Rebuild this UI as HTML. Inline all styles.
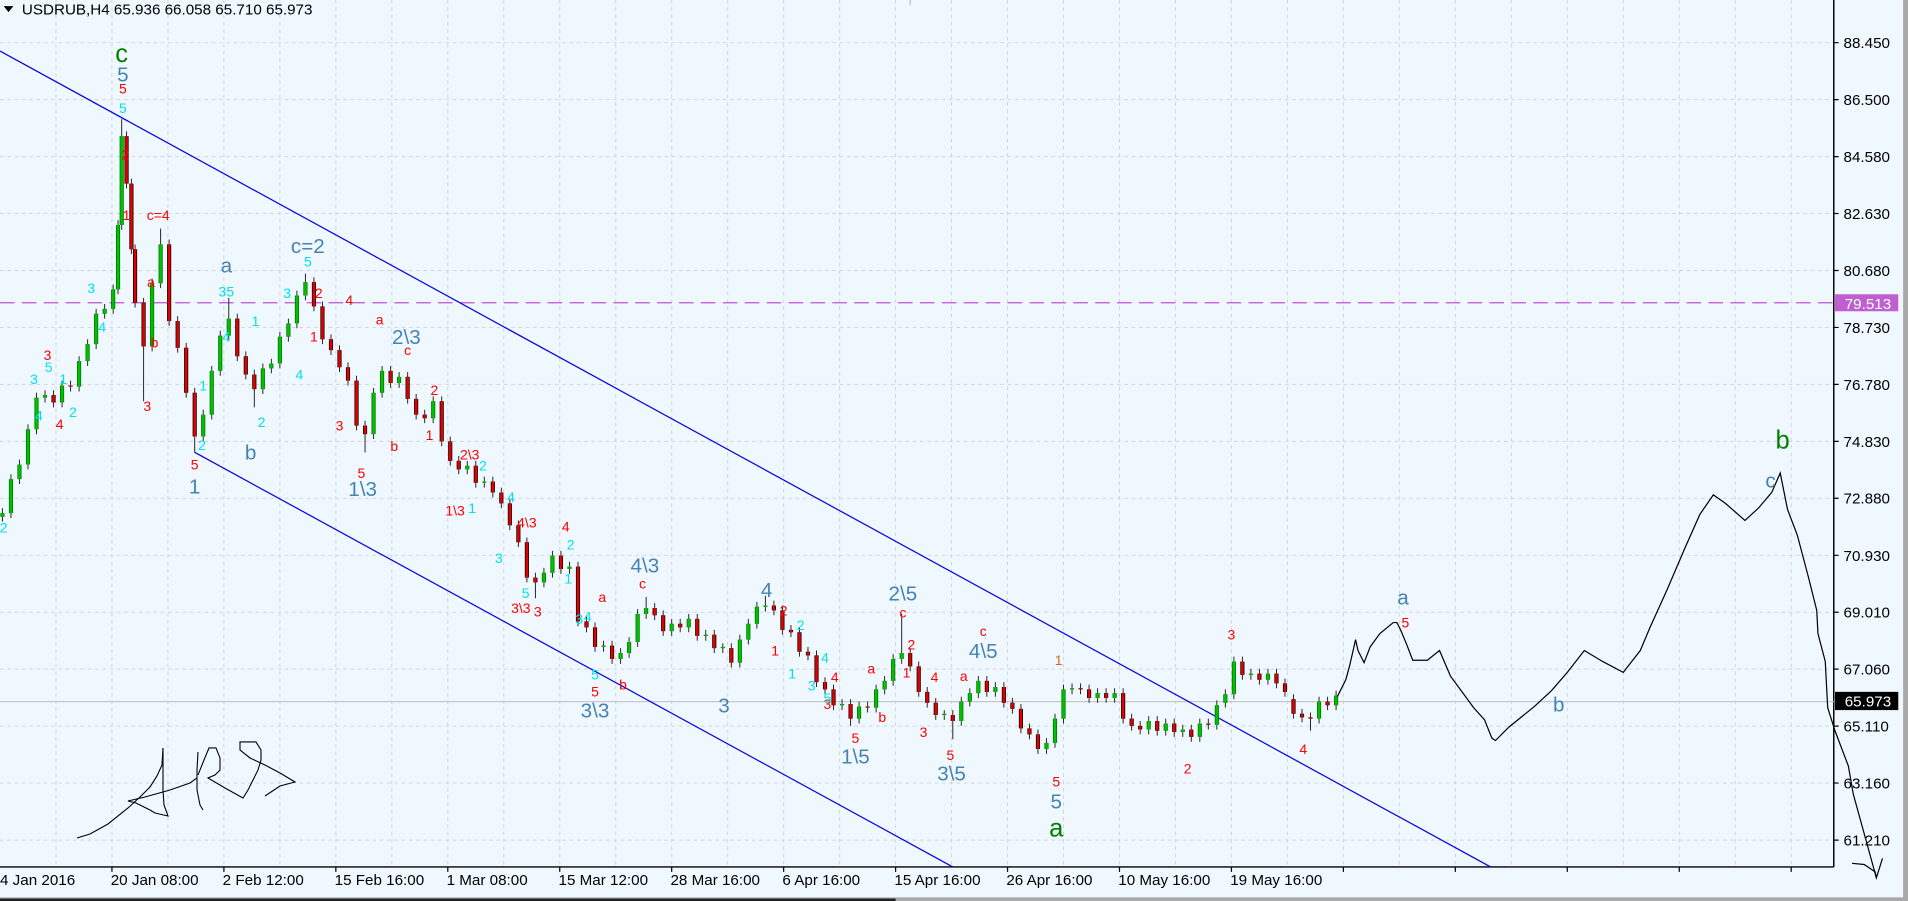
<!DOCTYPE html>
<html><head><meta charset="utf-8"><style>
html,body{margin:0;padding:0;background:#f0f8ff;overflow:hidden}
svg{display:block}
text{font-family:"Liberation Sans",sans-serif}
</style></head><body>
<svg width="1908" height="901" viewBox="0 0 1568 741" preserveAspectRatio="none" xmlns="http://www.w3.org/2000/svg">
<defs>
<path id="gb" d="M2 425V422M9 422V394M16 394V382M23 382V353M30 353V327M37 327V325M51 331V317M65 318V297M72 297V283M79 283V258M86 258V254M93 254V238M97 238V185M100 185V112M125 285V233M132 233V201M167 359V341M174 341V305M181 305V276M188 276V262M216 320V303M223 303V299M230 299V277M237 277V266M244 266V243M251 243V232M307 357V323M314 323V305M328 315V310M356 344V330M384 386V383M398 397V396M447 479V471M454 471V457M468 468V466M496 532V531M510 542V537M517 537V528M524 528V505M531 505V500M552 519V513M566 516V509M580 523V522M594 533V532M608 545V526M615 526V513M622 513V499M629 499V498M692 580V579M706 591V581M720 582V567M727 567V560M734 560V542M741 542V537M776 588V587M790 593V577M797 577V570M804 570V560M818 569V565M860 616V611M867 611V591M874 591V567M881 567V566M902 574V570M916 574V570M944 600V593M958 601V595M972 602V600M986 606V595M1000 596V580M1007 578V571M1014 571V544M1028 555V554M1042 559V554M1084 591V577M1098 580V572"/>
<path id="rb" d="M44 325V331M58 317V318M104 112V151M108 151V205M111 205V249M118 249V285M139 201V264M146 264V286M153 286V323M160 323V359M195 262V293M202 293V308M209 308V320M258 232V252M265 252V279M272 279V288M279 288V302M286 302V313M293 313V350M300 350V357M321 305V315M335 310V328M342 328V341M349 341V344M363 330V363M370 363V379M377 379V386M391 383V397M405 396V405M412 405V414M419 414V432M426 432V446M433 446V475M440 475V479M461 457V468M475 466V511M482 511V516M489 516V532M503 531V542M538 500V506M545 506V519M559 513V516M573 509V523M587 522V533M601 533V545M636 498V502M643 502V518M650 518V520M657 520V536M664 536V539M671 539V561M678 561V567M685 567V580M699 579V591M713 581V582M748 537V548M755 548V569M762 569V578M769 578V588M783 588V593M811 560V569M825 565V578M832 578V583M839 583V599M846 599V604M853 604V616M888 566V567M895 567V574M909 570V574M923 570V591M930 591V597M937 597V600M951 593V601M965 595V602M979 600V606M993 595V596M1021 544V555M1035 554V559M1049 554V562M1056 562V569M1063 575V587M1070 587V590M1077 590V591M1091 577V580"/>
</defs>
<rect x="0" y="0" width="1568" height="741" fill="#f0f8ff"/>
<g stroke="#d0d4d8" stroke-width="0.8" stroke-dasharray="3,3" fill="none">
<path d="M0 35.1H1507M0 81.9H1507M0 128.8H1507M0 175.6H1507M0 222.5H1507M0 269.3H1507M0 316.1H1507M0 363H1507M0 409.8H1507M0 456.7H1507M0 503.5H1507M0 550.3H1507M0 597.2H1507M0 644H1507M0 690.9H1507"/>
<path d="M46 0V713M92 0V713M138 0V713M184 0V713M230 0V713M276 0V713M322 0V713M368 0V713M414 0V713M460 0V713M506 0V713M552 0V713M598 0V713M644 0V713M690 0V713M736 0V713M782 0V713M828 0V713M874 0V713M920 0V713M966 0V713M1012 0V713M1058 0V713M1104 0V713M1150 0V713M1196 0V713M1242 0V713M1288 0V713M1334 0V713M1380 0V713M1426 0V713M1472 0V713"/>
</g>
<rect x="1564" y="0" width="4" height="741" fill="#a8a8a8"/>
<rect x="0" y="738" width="1568" height="3" fill="#a8a8a8"/>
<rect x="0" y="739" width="736" height="2" fill="#222"/>
<line x1="1507" y1="0" x2="1507" y2="713" stroke="#000" stroke-width="1.2"/>
<line x1="0" y1="713" x2="1507" y2="713" stroke="#000" stroke-width="1.2"/>
<path stroke="#000" stroke-width="1" d="M1507 35.1h4M1507 81.9h4M1507 128.8h4M1507 175.6h4M1507 222.5h4M1507 269.3h4M1507 316.1h4M1507 363h4M1507 409.8h4M1507 456.7h4M1507 503.5h4M1507 550.3h4M1507 597.2h4M1507 644h4M1507 690.9h4M92 713v4M184 713v4M276 713v4M368 713v4M460 713v4M552 713v4M644 713v4M736 713v4M828 713v4M920 713v4M1012 713v4M1104 713v4M1196 713v4M1288 713v4M1380 713v4M1472 713v4"/>
<g font-size="12.5" fill="#000">
<text x="1515" y="39.6">88.450</text><text x="1515" y="86.4">86.500</text><text x="1515" y="133.3">84.580</text><text x="1515" y="180.1">82.630</text><text x="1515" y="227">80.680</text><text x="1515" y="273.8">78.730</text><text x="1515" y="320.6">76.780</text><text x="1515" y="367.5">74.830</text><text x="1515" y="414.3">72.880</text><text x="1515" y="461.2">70.930</text><text x="1515" y="508">69.010</text><text x="1515" y="554.8">67.060</text><text x="1515" y="601.7">65.110</text><text x="1515" y="648.5">63.160</text><text x="1515" y="695.4">61.210</text>
<text x="0" y="728">4 Jan 2016</text>
<text x="91" y="728">20 Jan 08:00</text>
<text x="183" y="728">2 Feb 12:00</text>
<text x="275" y="728">15 Feb 16:00</text>
<text x="367" y="728">1 Mar 08:00</text>
<text x="459" y="728">15 Mar 12:00</text>
<text x="551" y="728">28 Mar 16:00</text>
<text x="643" y="728">6 Apr 16:00</text>
<text x="735" y="728">15 Apr 16:00</text>
<text x="827" y="728">26 Apr 16:00</text>
<text x="919" y="728">10 May 16:00</text>
<text x="1011" y="728">19 May 16:00</text>
</g>
<line x1="0" y1="577" x2="1507" y2="577" stroke="#c8c8c8" stroke-width="1"/>
<line x1="0" y1="249" x2="1507" y2="249" stroke="#c050d8" stroke-width="1" stroke-dasharray="12,6"/>
<rect x="1508" y="242" width="52" height="14" fill="#c060d0"/>
<text x="1516" y="254" font-size="12.5" fill="#fff">79.513</text>
<rect x="1508" y="569" width="52" height="15" fill="#000"/>
<text x="1516" y="581" font-size="12.5" fill="#fff">65.973</text>
<line x1="0" y1="42" x2="1225" y2="713" stroke="#0000e0" stroke-width="1"/>
<line x1="160" y1="372" x2="783" y2="713" stroke="#0000e0" stroke-width="1"/>
<!-- candles -->
<path fill="none" stroke="#222" stroke-width="0.8" d="M2 418V429M9 390V426M16 378V398M23 349V386M30 323V357M37 321V331M44 321V335M51 313V335M58 313V322M65 293V322M72 279V301M79 254V287M86 250V262M93 234V258M97 181V242M100 98V189M104 108V155M108 147V209M111 201V253M118 245V330M125 229V289M132 188V237M139 197V268M146 260V290M153 282V327M160 319V372M167 337V363M174 301V345M181 272V309M188 245V280M195 258V297M202 289V312M209 304V335M216 299V324M223 295V307M230 273V303M237 262V281M244 239V270M251 225V247M258 228V256M265 248V283M272 275V292M279 284V306M286 298V317M293 309V354M300 346V372M307 319V361M314 301V327M321 301V319M328 306V319M335 306V332M342 324V345M349 337V348M356 326V348M363 326V367M370 359V383M377 375V390M384 379V390M391 379V401M398 392V401M405 392V409M412 401V418M419 410V436M426 428V450M433 442V479M440 471V492M447 467V483M454 453V475M461 453V472M468 462V472M475 462V515M482 507V520M489 512V536M496 527V536M503 527V546M510 533V546M517 524V541M524 501V532M531 491V509M538 496V510M545 502V523M552 509V523M559 509V520M566 505V520M573 505V527M580 518V527M587 518V537M594 529V537M601 529V549M608 522V549M615 509V530M622 495V517M629 490V503M636 494V506M643 498V522M650 514V524M657 516V540M664 532V543M671 535V565M678 557V571M685 563V584M692 575V584M699 575V597M706 577V595M713 577V586M720 563V586M727 556V571M734 538V564M741 505V546M748 533V552M755 544V573M762 565V582M769 574V592M776 584V592M783 584V608M790 573V597M797 566V581M804 556V574M811 556V573M818 561V573M825 561V582M832 574V587M839 579V603M846 595V608M853 600V620M860 607V620M867 587V615M874 563V595M881 562V571M888 562V571M895 563V578M902 566V578M909 566V578M916 566V578M923 566V595M930 587V601M937 593V604M944 589V604M951 589V605M958 591V605M965 591V606M972 596V606M979 596V610M986 591V610M993 591V600M1000 576V600M1007 567V582M1014 540V575M1021 540V559M1028 550V559M1035 550V563M1042 550V563M1049 550V566M1056 558V573M1063 571V591M1070 583V594M1077 586V601M1084 573V595M1091 573V584M1098 568V584"/>
<use href="#gb" fill="none" stroke="#007000" stroke-width="3.4"/>
<use href="#gb" fill="none" stroke="#00c000" stroke-width="2.2"/>
<use href="#rb" fill="none" stroke="#000" stroke-width="3.4"/>
<use href="#rb" fill="none" stroke="#e00000" stroke-width="2.2"/>
<!-- forecast -->
<polyline fill="none" stroke="#000" stroke-width="1" points="1099,573 1106,559 1109,548 1112,535 1114,526 1116,535 1121,545 1126,532 1134,521 1145,512 1148,512 1151,518 1156,530 1161,543 1173,543 1183,535 1192,556 1211,582 1220,592 1226,607 1229,609 1240,598 1261,581 1275,568 1288,553 1302,535 1317,544 1334,553 1348,535 1356,516 1370,485 1385,450 1397,423 1408,407 1418,414 1434,428 1445,418 1456,405 1463,389 1469,419 1477,440 1486,474 1493,502 1494,521 1500,544 1502,582 1508,601 1519,630 1523,653 1531,682 1542,722 1547,706"/>
<polyline fill="none" stroke="#000" stroke-width="1" points="1522,710 1532,711 1541,717 1542,722"/>
<g transform="scale(0.8218,0.8224)" fill="none" stroke="#000" stroke-width="1.1">
<polyline points="77,838 90,834 108,824 128,808 140,797 150,787 157,776 162,765 163,748"/>
<polyline points="163,748 163,770 163,790 164,805 168,816 155,813 150,810 136,803 128,801 145,797 170,790 190,783 197,778"/>
<polyline points="198,752 197,770 197,790 200,805 203,810"/>
<polyline points="198,775 204,760 209,748 216,748 220,758 220,770 215,775 208,778 225,788 243,798 248,790 252,782 258,770 261,760 261,750 256,742 240,742 240,750 250,758 265,765 280,773 295,782 280,786 265,796"/>
</g>
<path d="M3,5 L11,5 L7,10 Z" fill="#000"/>
<text x="18" y="12" font-size="12.5" fill="#000">USDRUB,H4  65.936 66.058 65.710 65.973</text>
<line x1="748" y1="0" x2="748" y2="4" stroke="#bbb"/>
<g text-anchor="middle">
<g fill="#008000" font-size="21">
<text x="100" y="51">c</text><text x="868" y="688">a</text><text x="1465" y="369">b</text>
</g>
<g fill="#4682b4" font-size="17">
<text x="101" y="67">5</text><text x="186" y="224">a</text><text x="253" y="208">c=2</text>
<text x="206" y="378">b</text><text x="160" y="406">1</text><text x="298" y="408">1\3</text>
<text x="334" y="283">2\3</text><text x="530" y="471">4\3</text><text x="489" y="590">3\3</text>
<text x="595" y="586">3</text><text x="630" y="491">4</text><text x="703" y="628">1\5</text>
<text x="742" y="494">2\5</text><text x="808" y="541">4\5</text><text x="782" y="642">3\5</text>
<text x="868" y="665">5</text><text x="1153" y="497">a</text><text x="1281" y="585">b</text>
<text x="1455" y="401">c</text>
</g>
<g fill="#ff0000" font-size="11.5">
<text x="101" y="77">5</text><text x="103" y="131">2</text><text x="104" y="181">1</text>
<text x="130" y="181">c=4</text><text x="124" y="236">a</text><text x="127" y="286">b</text>
<text x="121" y="338">3</text><text x="39" y="296">3</text><text x="49" y="353">4</text>
<text x="160" y="386">5</text><text x="262" y="245">2</text><text x="258" y="281">1</text>
<text x="287" y="251">4</text><text x="279" y="354">3</text><text x="297" y="393">5</text>
<text x="312" y="267">a</text><text x="335" y="292">c</text><text x="324" y="371">b</text>
<text x="357" y="325">2</text><text x="353" y="362">1</text><text x="386" y="378">2\3</text>
<text x="374" y="424">1\3</text><text x="433" y="434">4\3</text><text x="465" y="437">4</text>
<text x="428" y="504">3\3</text><text x="442" y="507">3</text>
<text x="528" y="484">c</text><text x="495" y="495">a</text><text x="489" y="573">5</text>
<text x="512" y="567">b</text><text x="644" y="506">2</text><text x="637" y="539">1</text>
<text x="686" y="561">4</text><text x="680" y="583">3</text><text x="703" y="611">5</text>
<text x="716" y="554">a</text><text x="725" y="594">b</text><text x="742" y="508">c</text>
<text x="749" y="534">2</text><text x="745" y="557">1</text><text x="768" y="561">4</text>
<text x="759" y="606">3</text><text x="792" y="560">a</text><text x="808" y="523">c</text>
<text x="781" y="625">5</text><text x="868" y="647">5</text><text x="976" y="636">2</text>
<text x="1012" y="526">3</text><text x="1071" y="620">4</text><text x="1155" y="516">5</text>
</g>
<g fill="#d2691e" font-size="11.5"><text x="870" y="547">1</text></g>
<g fill="#00e0f0" font-size="11.5">
<text x="101" y="93">5</text><text x="75" y="241">3</text><text x="84" y="273">4</text>
<text x="28" y="316">3</text><text x="40" y="306">5</text><text x="52" y="316">1</text>
<text x="60" y="343">2</text><text x="32" y="346">4</text><text x="3" y="438">2</text>
<text x="186" y="244">35</text><text x="186" y="281">4</text><text x="210" y="268">1</text>
<text x="215" y="351">2</text><text x="167" y="321">1</text><text x="166" y="370">2</text>
<text x="253" y="219">5</text><text x="236" y="245">3</text><text x="246" y="312">4</text>
<text x="397" y="387">2</text><text x="388" y="422">1</text><text x="420" y="413">4</text>
<text x="410" y="463">3</text><text x="469" y="452">2</text><text x="467" y="480">1</text>
<text x="432" y="492">5</text><text x="483" y="511">4</text><text x="476" y="513">3</text>
<text x="489" y="559">5</text><text x="658" y="518">2</text><text x="651" y="558">1</text>
<text x="678" y="545">4</text><text x="667" y="568">3</text><text x="680" y="578">5</text>
</g>
</g>
</svg>
</body></html>
